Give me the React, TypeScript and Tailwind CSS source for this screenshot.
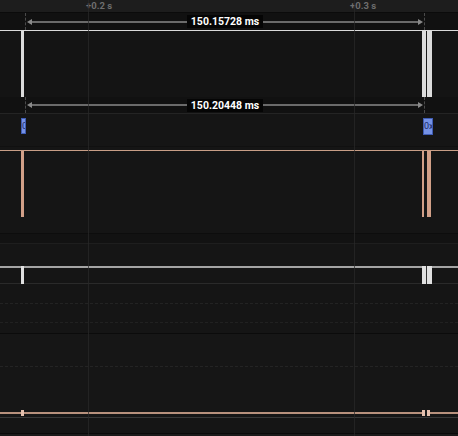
const font = { fontFamily: 'Roboto, "Liberation Sans", sans-serif' };

function Measure({ label }: { label: string }) {
  return (
    <div className="relative flex-1 flex items-center pl-[27px] pr-[35px]">
      <div className="absolute left-[25px] top-0 bottom-0 border-l border-dashed border-[#4a4a4a]" />
      <div className="absolute left-[424px] top-0 bottom-0 border-l border-dashed border-[#4a4a4a]" />
      <div className="w-0 h-0 border-y-[3px] border-y-transparent border-r-[5px] border-r-[#8a8a8a]" />
      <div className="flex-1 h-[2px] bg-[#6b6b6b]" />
      <div className="px-[4px] bg-[#050505] text-white text-[10.5px] font-bold leading-[13px]">{label}</div>
      <div className="flex-1 h-[2px] bg-[#6b6b6b]" />
      <div className="w-0 h-0 border-y-[3px] border-y-transparent border-l-[5px] border-l-[#8a8a8a]" />
    </div>
  );
}

// slice marks at the two timestamps of the selection
function Marks({
  color,
  h,
  top = 0,
  split = '#1a1a1a',
  first = 4,
  gap = 1,
  second = 5,
}: {
  color: string;
  h: string;
  top?: number;
  split?: string;
  first?: number;
  gap?: number;
  second?: number;
}) {
  return (
    <div className="absolute inset-x-0 flex pointer-events-none" style={{ top }}>
      <div className={`ml-[21px] w-[3px] ${h}`} style={{ background: color }} />
      <div className="ml-[398px] flex">
        <div className={h} style={{ background: color, width: first }} />
        <div className={h} style={{ background: split, width: gap }} />
        <div className={h} style={{ background: color, width: second }} />
      </div>
    </div>
  );
}

export default function App() {
  return (
    <div className="relative w-[458px] h-[436px] overflow-hidden bg-[#141414] flex flex-col" style={font}>
      {/* header ruler */}
      <div className="h-[12px] bg-[#1d1d1d] overflow-hidden flex items-start text-[9.5px] leading-none font-bold text-[#6e6e6e]">
        <span className="ml-[86px] mt-px">+0.2 s</span>
        <span className="ml-[238px] mt-px">+0.3 s</span>
      </div>
      <div className="h-px bg-[#0b0b0b]" />

      {/* measure 1 */}
      <div className="h-[17px] bg-[#111111] flex">
        <Measure label="150.15728 ms" />
      </div>
      <div className="h-px bg-[#dadada]" />

      {/* track 1 */}
      <div className="relative h-[66px] bg-[#141414]">
        <Marks color="#dcdcdc" h="h-[66px]" />
      </div>

      {/* measure 2 */}
      <div className="h-[16px] bg-[#111111] flex">
        <Measure label="150.20448 ms" />
      </div>
      <div className="h-px bg-[#242424]" />

      {/* slice labels */}
      <div className="h-[36px] bg-[#151515] flex flex-col">
        <div className="flex pt-[4px] h-[32px] text-[9px] text-[#1b2a66] whitespace-nowrap">
          <div className="ml-[21px] w-[5px] h-[16px] bg-[#7592e6] border border-[#3f5cb4] overflow-hidden leading-[14px]">0</div>
          <div className="ml-[397px] w-[10px] h-[17px] bg-[#7592e6] border border-[#3f5cb4] overflow-hidden leading-[15px]">0x</div>
        </div>
        <div className="h-px bg-[#101010]" />
      </div>
      <div className="h-px bg-[#c89e86]" />

      {/* orange track */}
      <div className="relative h-[82px] bg-[#151515]">
        <Marks color="#d2a088" h="h-[66px]" split="#151515" first={2} gap={3} second={4} />
      </div>
      <div className="h-px bg-[#0d0d0d]" />
      <div className="h-[9px] bg-[#121212]" />
      <div className="h-px bg-[#1e1e1e]" />
      <div className="h-[22px] bg-[#151515]" />
      <div className="h-[2px] bg-[#a4a4a4]" />

      {/* track 3 */}
      <div className="relative h-[65px] bg-[#151515] flex flex-col">
        <div className="h-[15px]" />
        <div className="h-px bg-[#2a2a2a]" />
        <div className="h-[19px]" />
        <div className="border-t border-dashed border-[#232323]" />
        <div className="h-[18px]" />
        <div className="border-t border-dashed border-[#212121]" />
        <Marks color="#e0e0e0" h="h-[18px]" top={-2} split="#333333" />
      </div>
      <div className="h-px bg-[#0b0b0b]" />

      {/* track 4 */}
      <div className="h-[78px] bg-[#161616] flex flex-col">
        <div className="h-[32px]" />
        <div className="border-t border-dashed border-[#242424]" />
      </div>
      <div className="relative h-[2px] bg-[#b8917d]">
        <Marks color="#e4c0ae" h="h-[6px]" top={-2} split="#1a1a1a" first={3} gap={2} second={3} />
      </div>
      <div className="h-[19px] bg-[#151515] flex flex-col">
        <div className="h-[3px]" />
        <div className="h-px bg-[#383838]" />
      </div>
      <div className="h-px bg-[#0a0a0a]" />
      <div className="h-[2px] bg-[#1a1a1a]" />

      {/* grid lines */}
      <div className="absolute left-[88px] top-0 bottom-0 w-px bg-[#2a2a2a]/70 pointer-events-none" />
      <div className="absolute left-[354px] top-0 bottom-0 w-px bg-[#2a2a2a]/70 pointer-events-none" />
    </div>
  );
}
